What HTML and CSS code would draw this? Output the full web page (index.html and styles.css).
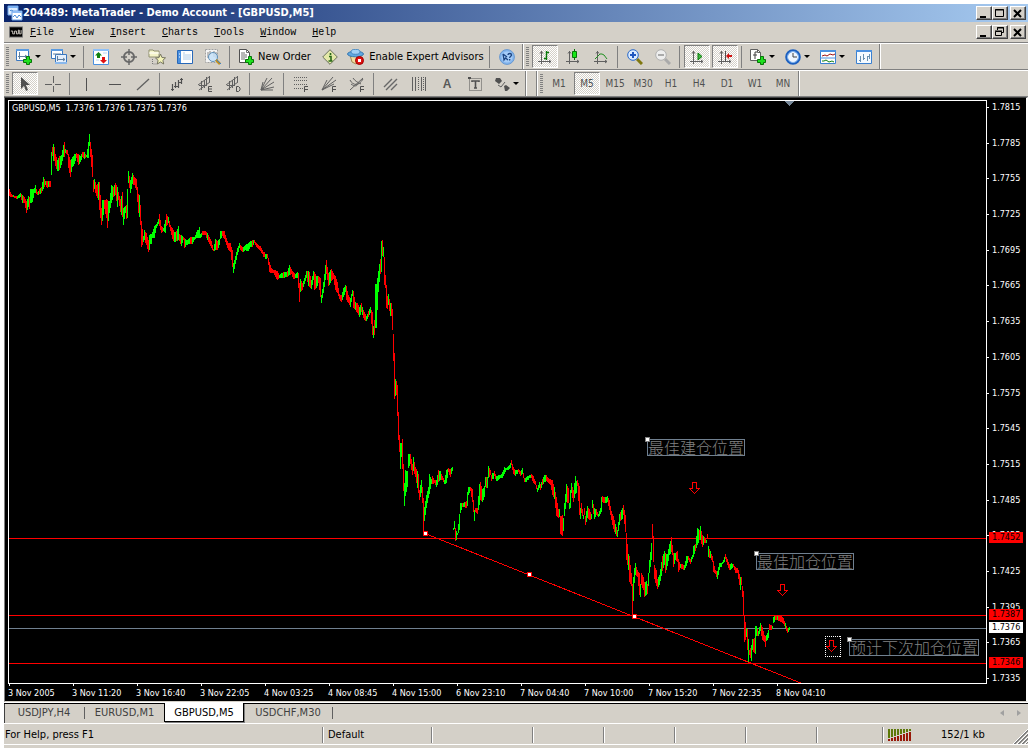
FILE: index.html
```html
<!DOCTYPE html>
<html lang="en">
<head>
<meta charset="utf-8">
<title>204489: MetaTrader - Demo Account - [GBPUSD,M5]</title>
<link rel="stylesheet" href="styles.css">
</head>
<body>
<svg class="sprite" aria-hidden="true">
  <defs>
    <g id="plus"><path d="M10.500 7.500h3v3h2v3h-2v2h-3v-2h-3v-3h3z" fill="#1fe01f" stroke="#087408"/></g>
    <g id="axes"><path d="M4.500 2v13M1 12.500h13M3 4.500l1.500-2 1.500 2M12 11l2 1.500-2 1.500" fill="none" stroke="#606060"/></g>
    <g id="min"><path d="M3 9h6v2H3z"/></g>
    <g id="close"><path d="M3 3l7 7M10 3l-7 7" stroke="#000" stroke-width="2"/></g>
    <g id="down-arrow"><path d="M3.500.5h4v6h3l-5 5-5-5h3z" fill="none" stroke="#f00"/></g>
  </defs>
</svg>
<div class="app">
  <header class="titlebar">
    <svg class="icon" viewBox="0 0 16 16"><path d="M1 1h10v9H1z" fill="#dcecff" stroke="#6da4e8"/><path d="M1 1h10v2H1z" fill="#7db2f2"/><path d="M5 6h10v9H5z" fill="#fff" stroke="#6da4e8"/><path d="M5 6h10v2H5z" fill="#8fbdf5"/><path d="M6 12l2-2 2 3 2-3 2 2M3 6l1-1 2 1" fill="none" stroke="#4b8dd8"/></svg>
    <h1 class="title">204489: MetaTrader - Demo Account - [GBPUSD,M5]</h1>
    <div class="controls">
      <button class="ctl" aria-label="Minimize"><svg viewBox="0 0 13 12"><use href="#min"/></svg></button><button class="ctl" aria-label="Maximize"><svg viewBox="0 0 13 12"><path d="M2.500 2.500h8v7h-8zM2 3h9" fill="none" stroke="#000"/></svg></button><button class="ctl ctl-close" aria-label="Close"><svg viewBox="0 0 13 12"><use href="#close"/></svg></button>
    </div>
  </header>
  <nav class="menubar">
    <svg class="doc-icon" viewBox="0 0 15 12"><path d="M0 0h15v12H0z" fill="#808080"/><path d="M1 1h13v10H1z"/><path d="M2 5h2v3h2V5h2v3h2V4h1v4h2V4" fill="none" stroke="#d4d0c8"/></svg>
    <button class="menu"><u>F</u>ile</button><button class="menu"><u>V</u>iew</button><button class="menu"><u>I</u>nsert</button><button class="menu"><u>C</u>harts</button><button class="menu"><u>T</u>ools</button><button class="menu"><u>W</u>indow</button><button class="menu"><u>H</u>elp</button>
    <div class="controls">
      <button class="ctl" aria-label="Minimize chart"><svg viewBox="0 0 13 12"><use href="#min"/></svg></button><button class="ctl" aria-label="Restore chart"><svg viewBox="0 0 13 12"><path d="M4.500 4V1.500h6v5H8M4 2h7M2.500 5.500h6v4h-6zM2 5h7" fill="none" stroke="#000"/></svg></button><button class="ctl ctl-close" aria-label="Close chart"><svg viewBox="0 0 13 12"><use href="#close"/></svg></button>
    </div>
  </nav>

  <div class="toolrow">
    <div class="toolbar">
      <span class="grip"></span>
      <button class="tool drop" aria-label="New chart"><svg class="icon" viewBox="0 0 16 16"><path d="M.5.500h12v11H.5z" fill="#fff" stroke="#3a78c0"/><path d="M0 0h13v2H0z" fill="#5a9ae0"/><path d="M3.500 3v7M2 7.500h9M9 6l2 1.500L9 9" stroke="#6080a0" fill="none"/><use href="#plus"/></svg></button>
      <button class="tool drop" aria-label="Profiles"><svg class="icon" viewBox="0 0 16 16"><path d="M.5.5h11v9H.5z" fill="#fff" stroke="#3a78c0"/><path d="M0 0h12v2H0z" fill="#5a9ae0"/><path d="M4.500 5.500h11v9h-11z" fill="#e6f0fc" stroke="#3a78c0"/><path d="M4 13h12v2H4z" fill="#8ab8ec"/><path d="M2 5h8M6.500 7v5M6 10.500h8M12 9l2 1.500-2 1.500" stroke="#6080a0" fill="none"/></svg></button>
      <span class="sep"></span>
      <button class="tool" aria-label="Market watch"><svg class="icon" viewBox="0 0 16 16"><path d="M.5.5h15v15H.5z" fill="#fff" stroke="#4a90e0"/><path d="M0 0h16v2H0z" fill="#8ec0f8"/><path d="M3 5h5M8 12h5M3 11h3M10 4h4" stroke="#b8d4f4"/><path d="M5.500 3l3.500 3.500H7V9H4V6.500H2z" fill="#108010"/><path d="M10.500 14.500L7 11h2V8h3v3h2z" fill="#e01010"/></svg></button>
      <button class="tool" aria-label="Data window"><svg class="icon" viewBox="0 0 16 16"><circle cx="8" cy="8" r="5" fill="none" stroke="#686868" stroke-width="2"/><path d="M8 0v6M8 10v6M0 8h6M10 8h6" stroke="#686868" stroke-width="1.500"/></svg></button>
      <button class="tool" aria-label="Navigator"><svg class="icon wide" viewBox="0 0 18 16"><path d="M1 3V1h4l1 1h5v6H1z" fill="#f4f4c8" stroke="#909070"/><path d="M1 4h10" stroke="#fff"/><path d="M4.500 10v5h4" fill="none" stroke="#777" stroke-dasharray="1 1"/><path d="M12.500 5l1.500 3.500 3.500.3-2.600 2.500.8 3.700-3.200-2-3.200 2 .8-3.700L7.500 9l3.500-.4z" fill="#f4f4b8" stroke="#757560"/></svg></button>
      <button class="tool" aria-label="Terminal"><svg class="icon" viewBox="0 0 16 16"><path d="M.5 1.500h15v13H.5z" fill="#fff" stroke="#2868b8"/><path d="M1 2h3v12H1z" fill="#4a90e0"/><path d="M6 4h2M6 6h8M6 8h8M6 10h8" stroke="#b0cce8"/><path d="M2 5h1M2 8h1" stroke="#fff"/></svg></button>
      <button class="tool" aria-label="Strategy tester"><svg class="icon" viewBox="0 0 16 16"><path d="M.5.500h12v13H.5z" fill="#f4f4f4" stroke="#a0a0a0" stroke-dasharray="2 1"/><path d="M3 3v6M5 2v4M9 2v6M11 3v6" stroke="#888"/><circle cx="8" cy="8" r="4.500" fill="#c6e0f8" fill-opacity=".85" stroke="#6090b8"/><path d="M11 11l4 4" stroke="#c09020" stroke-width="2.500"/><path d="M12 11l4 4" stroke="#4080c0"/></svg></button>
      <span class="sep"></span>
      <button class="tool labelled order"><svg class="icon" viewBox="0 0 16 16"><path d="M1.500.500h7l3 3v10h-10z" fill="#fff" stroke="#505050"/><path d="M8.500.5v3h3M3 4h4M3 6h6M3 8h6M3 10h4" fill="none" stroke="#707070"/><use href="#plus"/></svg>New Order</button>
      <button class="tool" aria-label="MetaEditor"><svg class="icon" viewBox="0 0 16 16"><path d="M8 .700L15.300 8 8 15.300.7 8z" fill="#e4e8a8" stroke="#68705c"/><path d="M8.500 4v2M7 7.500h2v4M6.500 12h4" stroke="#286818" stroke-width="1.600" fill="none"/></svg></button>
      <button class="tool labelled experts"><svg class="icon wide" viewBox="0 0 18 16"><path d="M3 6h11l-1 6-4 3-4-2z" fill="#f0dca0" stroke="#a08850"/><ellipse cx="8.500" cy="5" rx="8" ry="2.800" fill="#60a8e0" stroke="#3878b0"/><ellipse cx="8.500" cy="2.800" rx="4.500" ry="2.500" fill="#a0d0f4" stroke="#4888c0"/><circle cx="12.500" cy="11.500" r="4" fill="#e01010" stroke="#a00000"/><path d="M11 10h3v3h-3z" fill="#fff"/></svg>Enable Expert Advisors</button>
      <span class="sep"></span>
      <button class="tool" aria-label="Help"><svg class="icon" viewBox="0 0 16 16"><circle cx="8" cy="8" r="7.400" fill="#85b6ee" stroke="#6898d0"/><circle cx="8" cy="8" r="5.500" fill="#a5ccf8"/><path d="M4 5l1 6 1.500-2L9 11M4 5l4 3M9 6c0-2 3.500-2 3.500 0 0 1.500-1.800 1-1.800 3M10.700 10v1.500" fill="none" stroke="#1c4480" stroke-width="1.300"/></svg></button>
    </div>
    <div class="toolbar">
      <span class="grip"></span>
      <button class="tool pressed" aria-label="Bar chart"><svg class="icon" viewBox="0 0 16 16"><use href="#axes"/><path d="M9.500 2v9M7 9.500h2M10 3.500h2" stroke="#087808" stroke-width="1.400"/></svg></button>
      <button class="tool" aria-label="Candlesticks"><svg class="icon" viewBox="0 0 16 16"><use href="#axes"/><path d="M9.500 0v11" stroke="#087808"/><path d="M7.500 2.500h4v6h-4z" fill="#18e818" stroke="#087808"/></svg></button>
      <button class="tool" aria-label="Line chart"><svg class="icon" viewBox="0 0 16 16"><use href="#axes"/><path d="M2 10L7 5h2l2 1 3 4" fill="none" stroke="#209020"/></svg></button>
      <span class="sep"></span>
      <button class="tool" aria-label="Zoom in"><svg class="icon" viewBox="0 0 16 16"><path d="M10 10l5 5" stroke="#807810" stroke-width="3"/><circle cx="6" cy="6" r="5.300" fill="#dcecff" stroke="#2868c8"/><path d="M3 6h6M6 3v6" stroke="#2058c0" stroke-width="2"/></svg></button>
      <button class="tool" aria-label="Zoom out"><svg class="icon" viewBox="0 0 16 16"><path d="M10 10l5 5" stroke="#aaa" stroke-width="3"/><circle cx="6" cy="6" r="5.300" fill="#eee" stroke="#b0b0b0"/><path d="M3 6h6" stroke="#aaa" stroke-width="2"/></svg></button>
      <span class="sep"></span>
      <button class="tool pressed" aria-label="Auto scroll"><svg class="icon" viewBox="0 0 16 16"><use href="#axes"/><path d="M9 4l4 3.500L9 11z" fill="#40b840" stroke="#087808"/></svg></button>
      <button class="tool pressed" aria-label="Chart shift"><svg class="icon" viewBox="0 0 16 16"><use href="#axes"/><path d="M8.500 2v10" stroke="#505050"/><path d="M9 7l3-3v2h3v2h-3v2z" fill="#d01010"/></svg></button>
      <span class="sep"></span>
      <button class="tool drop" aria-label="Indicators"><svg class="icon" viewBox="0 0 16 16"><path d="M.5.500h7l3 3v8H.5z" fill="#fff" stroke="#606060"/><path d="M7 3H5v7M3 6h4" fill="none" stroke="#404040"/><path d="M7.500.5v3h3" fill="none" stroke="#606060"/><use href="#plus"/></svg></button>
      <button class="tool drop" aria-label="Periods"><svg class="icon" viewBox="0 0 16 16"><circle cx="8" cy="8" r="6.500" fill="#eef6ff" stroke="#1c60c0" stroke-width="2.600"/><circle cx="8" cy="8" r="5.500" fill="none" stroke="#88b8f0"/><path d="M8 4v4h4" fill="none" stroke="#404040"/></svg></button>
      <button class="tool drop" aria-label="Templates"><svg class="icon" viewBox="0 0 16 16"><path d="M.5 1.500h15v13H.5z" fill="#fff" stroke="#3a80d0"/><path d="M0 1h16v2H0z" fill="#4a90e0"/><path d="M0 9h16" stroke="#4a90e0"/><path d="M2 7l3-1 2 1 3-2 3 1 2-1" fill="none" stroke="#a01010"/><path d="M2 12h2l2-1 3 2 3-1 2 1" fill="none" stroke="#108010"/></svg></button>
      <button class="tool" aria-label="Tile windows"><svg class="icon" viewBox="0 0 16 16"><path d="M.5 1.500h15v13H.5z" fill="#f4faff" stroke="#3a80d0"/><path d="M0 1h16v2H0z" fill="#4a90e0"/><path d="M4.500 7v6M3 11.500h2M7.500 5v6M7 9.500h2M11.500 7v5M11 7.500h2M13.500 5v5" stroke="#6890b0" fill="none"/></svg></button>
    </div>
  </div>

  <div class="toolrow">
    <div class="toolbar">
      <span class="grip"></span>
      <button class="tool pressed" aria-label="Cursor"><svg class="icon" viewBox="0 0 16 16"><path d="M4 1v12l3-3 2 5 2-1-2-5h4z" fill="#505050"/></svg></button>
      <button class="tool" aria-label="Crosshair"><svg class="icon" viewBox="0 0 16 16"><path d="M8.500 0v7M8.500 10v6M0 8.500h7M10 8.500h6" stroke="#606060"/></svg></button>
      <span class="sep"></span>
      <button class="tool" aria-label="Vertical line"><svg class="icon" viewBox="0 0 16 16"><path d="M7.500 2v13" stroke="#505050"/></svg></button>
      <button class="tool" aria-label="Horizontal line"><svg class="icon" viewBox="0 0 16 16"><path d="M2 8.500h12" stroke="#505050"/></svg></button>
      <button class="tool" aria-label="Trendline"><svg class="icon" viewBox="0 0 16 16"><path d="M2 14L14 3" stroke="#606060" stroke-width="1.300"/></svg></button>
      <span class="sep"></span>
      <button class="tool" aria-label="Regression channel"><svg class="icon" viewBox="0 0 16 16"><path d="M3.500 8v7M2 13.500h3M6.500 6v6M5 10.500h4M9.500 4v8M9 6.500h3M12.500 2v6M11 3.500h3" fill="none" stroke="#505050" stroke-width="1.200"/></svg></button>
      <button class="tool" aria-label="Equidistant channel"><svg class="icon" viewBox="0 0 16 16"><path d="M1 9L12 1M2 14L13 6M4.500 5v9M7.500 4v8M9.500 1v9M12.500 0v6M2 9.500h7" fill="none" stroke="#606060"/><path d="M15 10.500h-3.500v5H15M12 13h3" fill="none" stroke="#505050"/></svg></button>
      <button class="tool" aria-label="Deviation channel"><svg class="icon" viewBox="0 0 16 16"><path d="M1 9L12 1M2 14L13 6M4.500 5v9M7.500 4v8M9.500 1v9M12.500 0v6M2 9.500h7" fill="none" stroke="#606060"/><path d="M11.500 10.500h2l1.500 1.500v2l-1.500 1.500h-2z" fill="none" stroke="#505050"/></svg></button>
      <span class="sep"></span>
      <button class="tool" aria-label="Gann fan"><svg class="icon" viewBox="0 0 16 16"><path d="M2 14L4 6M2 14L8 2M2 14L13 2M2 14L15 6M2 14l13-3M2 14h12" stroke="#606060"/></svg></button>
      <span class="sep"></span>
      <button class="tool" aria-label="Fibonacci retracement"><svg class="icon" viewBox="0 0 16 16"><path d="M1 1.500h14M1 4.500h14M1 8.500h14M1 12.500h9" stroke="#606060" stroke-dasharray="1 1"/><path d="M11.500 16v-5.500H15M12 13.500h3" fill="none" stroke="#505050"/></svg></button>
      <button class="tool" aria-label="Fibonacci fan"><svg class="icon" viewBox="0 0 16 16"><path d="M1 14L6 4M1 14L12 1M1 14L15 4M1 14l12-6" stroke="#606060"/><path d="M11.500 16v-5.500H15M12 13.500h3" fill="none" stroke="#505050"/></svg></button>
      <button class="tool" aria-label="Fibonacci arcs"><svg class="icon" viewBox="0 0 16 16"><path d="M1 14L14 2M1 4c3 6 9 6 13-1M4 2c2 3 4 4 8 6M2 8c4 3 6 2 7 0" fill="none" stroke="#606060"/><path d="M11.500 16v-5.500H15M12 13.500h3" fill="none" stroke="#505050"/></svg></button>
      <span class="sep"></span>
      <button class="tool" aria-label="Parallel lines"><svg class="icon" viewBox="0 0 16 16"><path d="M1 11L9 3M3 14L14 3M8 14l6-6" stroke="#686868" stroke-width="1.400"/></svg></button>
      <button class="tool" aria-label="Cycle lines"><svg class="icon" viewBox="0 0 16 16"><path d="M1.500 1v14M4.500 1v14M10.500 1v14M14.500 1v14" stroke="#606060"/><path d="M7.500 1v14M12.500 1v14" stroke="#606060" stroke-dasharray="1 1"/></svg></button>
      <button class="tool letter">A</button>
      <button class="tool" aria-label="Text label"><svg class="icon" viewBox="0 0 16 16"><path d="M2.500 2.500h12v12h-12z" fill="none" stroke="#505050" stroke-dasharray="1 1"/><path d="M1 1h3v2H1z" fill="#505050"/><path d="M5 6V5h7v1M8.500 5v7M7 12h3" fill="none" stroke="#505050" stroke-width="1.600"/></svg></button>
      <button class="tool drop" aria-label="Arrows"><svg class="icon" viewBox="0 0 16 16"><path d="M2 2h4l2 3-3 3-4-3zM10 10l2-1 4 3-3 3h-2z" fill="#505050"/><path d="M7 11l4-5M4 9l3 2" stroke="#606060"/></svg></button>
    </div>
    <div class="toolbar filler"></div>
    <div class="toolbar">
      <span class="grip"></span>
      <button class="tool time">M1</button><button class="tool time pressed">M5</button><button class="tool time">M15</button><button class="tool time">M30</button><button class="tool time">H1</button><button class="tool time">H4</button><button class="tool time">D1</button><button class="tool time">W1</button><button class="tool time">MN</button>
    </div>
  </div>

  <main class="chart">
    <section class="plot">
      <svg class="canvas" id="canvas" viewBox="9 101 977 582" preserveAspectRatio="none">
        <path d="M785 101h9l-4.500 5z" fill="#778899"/>
        <path d="M9 538.500h977M9 615.500h977M9 663.500h977" stroke="#f00"/>
        <path d="M9 628.500h977" stroke="#708090"/>
        <path id="falling" class="bars" stroke="#f00"/>
        <path id="rising" class="bars" stroke="#0f0"/>
        <path class="bars" d="M425 533.500L802 683.500" stroke="#f00"/>
        <path d="M423.500 531.500h4v4h-4zM527.500 572.500h4v4h-4zM632.500 614.500h4v4h-4z" fill="#fff" stroke="#f00"/>
        <use href="#down-arrow" x="689" y="482"/><use href="#down-arrow" x="777" y="584"/><use href="#down-arrow" x="826" y="640"/>
        <path d="M825 636.500h16M825 656.500h16M825.500 636v21M840.500 636v21" fill="none" stroke="#fff" stroke-dasharray="1 1"/>
      </svg>
      <p class="quote">GBPUSD,M5&nbsp; 1.7376 1.7376 1.7375 1.7376</p>
      <p class="note note-open" lang="zh">最佳建仓位置</p>
      <p class="note note-add" lang="zh">最佳加仓位置</p>
      <p class="note note-next" lang="zh">预计下次加仓位置</p>
    </section>
    <aside class="prices">
      <span>1.7815</span><span>1.7785</span><span>1.7755</span><span>1.7725</span><span>1.7695</span><span>1.7665</span><span>1.7635</span><span>1.7605</span><span>1.7575</span><span>1.7545</span><span>1.7515</span><span>1.7485</span><span>1.7455</span><span>1.7425</span><span>1.7395</span><span>1.7365</span><span>1.7335</span>
      <b class="tag tag-high">1.7452</b><b class="tag tag-mid">1.7387</b><b class="tag tag-now">1.7376</b><b class="tag tag-low">1.7346</b>
    </aside>
    <div class="times">
      <span>3 Nov 2005</span><span>3 Nov 11:20</span><span>3 Nov 16:40</span><span>3 Nov 22:05</span><span>4 Nov 03:25</span><span>4 Nov 08:45</span><span>4 Nov 15:00</span><span>6 Nov 23:10</span><span>7 Nov 04:40</span><span>7 Nov 10:00</span><span>7 Nov 15:20</span><span>7 Nov 22:35</span><span>8 Nov 04:10</span>
    </div>
  </main>

  <nav class="tabs">
    <button class="tab">USDJPY,H4</button><span class="tab-end"></span><button class="tab narrow">EURUSD,M1</button><button class="tab active">GBPUSD,M5</button><button class="tab wide">USDCHF,M30</button><span class="tab-end"></span>
    <div class="scrollers">
      <button class="scroller" aria-label="Scroll left"><svg viewBox="0 0 4 6"><path d="M4 0v6L0 3z"/></svg></button>
      <button class="scroller" aria-label="Scroll right"><svg viewBox="0 0 4 6"><path d="M0 0v6l4-3z"/></svg></button>
    </div>
  </nav>
  <footer class="status">
    <span class="cell help">For Help, press F1</span><span class="cell profile">Default</span><span class="cell c-long"></span><span class="cell c-short"></span><span class="cell c-short"></span><span class="cell c-short"></span><span class="cell c-short"></span><span class="cell c-last"></span>
    <span class="cell traffic">
      <svg class="signal" viewBox="0 0 23 12"><path d="M1 0v9M4 0v8M7 0v7M10 0v6M13 0v5M16 0v4M19 0v3M22 0v2" stroke="#5c7808" stroke-width="2"/><path d="M1 10v2M4 9v3M7 8v4M10 7v5M13 6v6M16 5v7M19 4v8M22 3v9" stroke="#981808" stroke-width="2"/></svg>
      152/1 kb
    </span>
    <svg class="sizer" viewBox="0 0 16 16"><path d="M1 16L16 1M5 16L16 5M9 16l7-7M13 16l3-3" stroke="#fff"/><path d="M2 16L16 2M3 16L16 3M6 16L16 6M7 16l9-9M10 16l6-6M11 16l5-5M14 16l2-2" stroke="#808080"/></svg>
  </footer>
</div>
<script src="chart.js"></script>
</body>
</html>
```

FILE: styles.css
```css
* { box-sizing: border-box; }
body { margin: 0; background: #fff; padding: 4px 4px 0; font: 11px/13px "DejaVu Sans Condensed", "DejaVu Sans", sans-serif; color: #000; }
button { font: inherit; color: inherit; background: none; border: 0; padding: 0; margin: 0; }
p, h1 { margin: 0; }
svg { display: block; }
.sprite { position: absolute; width: 0; height: 0; }
.app { display: flex; flex-direction: column; min-height: calc(100vh - 4px); background: #d4d0c8; }
.icon { width: 16px; height: 16px; flex: none; }
.icon.wide { width: 18px; }

.titlebar { display: flex; align-items: center; height: 18px; padding: 0 2px 0 3px; background: linear-gradient(90deg, #0a246a, #a6caf0); color: #fff; }
.title { font-size: 11px; line-height: 18px; font-weight: bold; flex: 1; white-space: nowrap; }
.controls { display: flex; margin-left: auto; }
.ctl { width: 16px; height: 14px; background: #d4d0c8; border: 1px solid; border-color: #fff #404040 #404040 #fff; box-shadow: inset -1px -1px #808080; }
.ctl svg { width: 13px; height: 12px; }
.ctl-close { margin-left: 2px; }
.menubar { display: flex; align-items: center; height: 21px; padding: 0 2px 0 5px; border-bottom: 1px solid #808080; }
.doc-icon { width: 14px; height: 12px; margin-right: -1px; }
.menu { font: 10px/14px "Liberation Mono", monospace; padding: 1px 8px 0; }

.toolrow { display: flex; height: 27px; border-top: 1px solid #fff; border-bottom: 1px solid #808080; background: #d4d0c8; }
.toolbar { display: flex; align-items: center; padding-right: 1px; border-right: 1px solid #808080; box-shadow: 1px 0 #fff; }
.toolbar + .toolbar { margin-left: 1px; }
.filler { width: 10px; }
.grip { width: 3px; height: 20px; margin: 0 2px; background: repeating-linear-gradient(#808080 0 1px, #d4d0c8 1px 2px); }
.tool { width: 28px; height: 23px; display: flex; align-items: center; justify-content: center; }
.tool.pressed { width: 26px; margin: 0 1px; border: 1px solid; border-color: #808080 #fff #fff #808080; background: repeating-conic-gradient(#fff 0 25%, #d4d0c8 0 50%) 0 0 / 2px 2px; }
.tool.drop { width: 35px; gap: 3px; }
.tool.drop::after { content: ""; border: 3px solid transparent; border-top-color: #000; border-bottom: 0; }
.tool.labelled { gap: 4px; white-space: nowrap; }
.tool.order { width: 83px; }
.tool.experts { width: 143px; }
.sep { width: 6px; height: 22px; background: linear-gradient(#808080, #808080) 2px 0 / 1px 100% no-repeat; }
.letter { font: bold 12px/14px "Liberation Sans", sans-serif; color: #585858; }
.time { font-size: 10px; color: #505050; }

.chart { flex: 1; display: grid; grid-template: minmax(0, 1fr) 17px / minmax(0, 1fr) 39px; background: #000; color: #fff; font-size: 9px; line-height: 11px; border-top: 1px solid #404040; border-left: 1px solid #808080; border-right: 2px solid #fff; border-bottom: 1px solid #d4d0c8; padding: 2px 0 0 3px; }
.plot { position: relative; border: 1px solid #fff; min-height: 300px; }
.canvas { position: absolute; inset: 0; width: 100%; height: 100%; shape-rendering: crispEdges; }
.bars { fill: none; }
.quote { position: absolute; left: 3px; top: 2px; }
.note { position: absolute; height: 17px; border: 1px solid #708090; color: #808080; font: 16px/14px "Noto Sans CJK SC", sans-serif; font-weight: 300; white-space: nowrap; }
.note::before { content: ""; position: absolute; left: -3px; top: -3px; width: 3px; height: 3px; background: #fff; border: 1px solid #808080; }
.note-open { left: 638px; top: 338px; }
.note-add { left: 747px; top: 452px; }
.note-next { left: 840px; top: 538px; }
.prices { position: relative; display: flex; flex-direction: column; justify-content: space-between; padding: 2px 0 0; }
.prices span { display: flex; align-items: center; gap: 3px; }
.prices span::before { content: ""; width: 2px; height: 1px; background: #fff; }
.tag { position: absolute; left: 2px; width: 34px; padding-left: 3px; background: #f00; color: #000; font-weight: normal; }
.tag-high { top: 432px; }
.tag-mid { top: 509px; }
.tag-now { top: 522px; background: #fff; }
.tag-low { top: 557px; }
.times { grid-column: 1 / 3; display: flex; overflow: hidden; }
.times span { position: relative; flex: 0 0 64px; padding-top: 4px; line-height: 11px; white-space: nowrap; }
.times span::before { content: ""; position: absolute; left: 1px; top: 0; width: 1px; height: 2px; background: #fff; }

.tabs { display: flex; height: 21px; border-top: 1px solid #fff; box-shadow: inset 0 1px #000, inset 1px 0 #404040; color: #404040; }
.tab { height: 19px; width: 80px; }
.tab-end { width: 1px; height: 12px; background: #606060; margin-top: 4px; }
.tab.narrow { width: 79px; }
.tab.wide { width: 88px; }
.tab.active { background: #fff; color: #000; border: 1px solid #000; border-top: 0; box-shadow: 1px 1px #808080; }
.scrollers { margin: 7px 7px 0 auto; display: flex; gap: 13px; align-items: flex-start; }
.scroller svg { width: 4px; height: 6px; fill: #a0a0a0; }

.status { position: relative; display: flex; align-items: center; height: 25px; border-top: 1px solid #fff; border-bottom: 3px solid #d4d0c8; box-shadow: inset 0 -1px #fff; }
.cell { height: 16px; line-height: 16px; border-right: 1px solid #808080; box-shadow: 1px 0 #fff; white-space: nowrap; padding-left: 1px; }
.help { flex: 1; }
.profile { width: 109px; padding-left: 5px; }
.c-long { width: 101px; }
.c-short { width: 71px; }
.c-last { width: 66px; }
.traffic { width: 145px; display: flex; align-items: center; gap: 30px; padding-left: 5px; border: 0; box-shadow: none; }
.signal { width: 23px; height: 12px; }
.sizer { position: absolute; right: 0; bottom: 1px; width: 16px; height: 16px; }
```

FILE: chart.js
```js
// Each bar: x, high, low and an optional colour (r = falling, g = rising).
const bars = `9 189 196 r,11 194 197 r,13 195 197 g,16 196 199 r,18 195 198 g,20 193 197 g,22 195 203 g,24 197 203 r,26 201 213 r,28 196 207 g,29 197 209 r,30 189 203 g,32 189 202 g,34 188 193 g,35 185 193 g,37 192 195 r,39 189 194 r,41 187 193 r,43 177 189 g,45 181 185 g,47 181 188 r,48 181 187 g,50 181 187 r,51 152 175 g,52 147 156 r,53 144 161 g,54 147 161 r,55 154 166 r,57 160 171 g,59 156 170 r,61 155 165 g,63 145 157 g,64 142 157 r,65 149 153 g,67 150 155 r,68 154 168 r,70 160 177 r,72 157 167 g,74 154 164 g,76 153 158,78 154 165 r,80 156 162 g,82 152 157 r,84 152 159 g,86 155 157,88 142 158 g,89 134 146 g,90 142 157 r,92 155 177 r,93 180 192 r,94 179 189 g,96 185 196 r,98 182 200 g,99 182 210 r,101 208 225 r,102 200 221 g,104 200 209 r,106 199 218 r,107 200 228 r,109 201 213 g,111 185 203 g,113 187 197 r,115 183 195 r,117 187 207 g,118 192 200 r,120 199 212 r,122 192 217 r,123 208 225 g,125 206 213 g,126 205 219 r,127 189 218 g,128 171 183 g,130 180 193 g,132 173 184 g,134 177 185 r,136 179 190 r,138 194 213 r,139 195 217 g,140 205 225 r,141 221 247 r,143 236 242 g,144 230 240 g,146 233 245 r,148 240 252 r,149 235 250 g,152 232 238 g,154 226 238 g,156 224 228,158 219 224 g,159 214 226 r,161 226 233 r,163 228 231,165 220 233 g,166 214 226 r,168 217 223 g,170 225 231 r,172 228 239 r,174 232 242 g,176 231 241 r,178 226 240 g,179 234 241 r,181 235 246 g,183 237 240,184 238 248 r,186 240 245,188 239 244 g,190 237 244 r,192 237 244 g,194 237 240,196 232 238 g,199 227 238 g,200 234 238,202 231 235,205 231 235 r,207 233 240 g,209 237 244,211 241 248 r,213 249 251 r,215 239 250 g,217 241 250 r,219 239 245 g,220 231 239 g,222 231 236,224 231 239 r,226 238 245,228 243 250 r,230 243 252 r,232 250 267 r,233 263 273 g,235 256 264 g,237 248 255 g,239 243 248 g,241 246 251 r,243 247 252,245 245 250 g,248 243 251,250 241 247,252 240 247 r,254 240 243,256 243 247 r,258 245 249,260 246 251 r,262 250 254,265 254 259 g,267 254 258,269 262 272 r,271 268 273 r,273 270 273,275 270 277,277 271 280 r,279 275 278,281 273 278 g,283 272 278 r,285 272 277 g,287 271 277 r,289 265 275 g,291 269 274,293 272 279 r,295 274 278,297 272 278 g,298 273 288 r,299 283 302 r,300 279 292 g,302 283 290 r,304 278 284 g,306 271 278 g,308 271 286 g,309 272 287 r,311 280 289 g,313 271 280 g,314 272 290 r,316 276 288 g,318 276 283 r,320 278 297 r,321 295 303 g,323 282 293 g,325 265 280 g,326 260 274 r,328 273 286 r,330 270 283 g,331 269 281 r,333 273 279,335 276 290 r,337 282 293 r,339 294 299 r,341 295 302 r,343 288 297 g,345 285 292 g,346 286 300 r,348 295 303,350 298 307 g,352 290 296 g,353 291 308 r,355 302 310 g,357 303 313 r,359 307 317 g,361 303 312 r,362 307 315 g,364 312 320 r,366 316 321 g,368 311 317 r,370 307 313 g,372 312 335 r,373 326 338 g,374 320 335 r,375 284 328 g,376 284 328 g,378 271 292 g,379 264 282 g,380 259 274 r,381 241 272 g,382 240 256 r,383 247 257 g,384 257 285 r,385 275 288 r,386 285 308 r,387 296 309 r,388 294 305 g,390 303 316 g,391 303 316 r,392 309 330 r,393 334 361 r,394 353 399 r,395 379 396 g,396 381 395 r,397 385 416 r,398 412 440 r,399 435 452 r,400 443 469 g,401 443 457 g,402 439 469 r,403 464 491 r,404 483 506 g,405 470 496 g,407 471 487,408 454 468 g,410 454 464 r,412 464 475 r,413 457 471 g,415 467 477 r,417 471 488 g,418 474 493 r,419 490 500 r,421 480 493 g,422 487 503 r,423 498 533 r,424 507 521 g,426 495 508 g,428 487 498 g,429 474 494 g,431 479 484,432 476 484 r,434 480 483,436 480 487,438 470 482 r,440 471 480 g,442 476 480,444 480 484,446 470 483 g,448 468 472,450 469 477 r,452 467 471 g,453 528 530 g,454 521 529 g,455 528 541 r,456 531 540 g,457 533 535 g,459 514 530 g,460 503 513 g,462 503 507 r,464 502 507 g,466 501 508 r,467 492 506 g,468 487 495 g,470 487 491,472 489 502 r,474 510 521 g,475 508 512,477 508 514 r,479 484 505 g,480 482 500 r,482 489 502 g,484 486 497,485 477 487 g,487 477 488 g,488 466 478 g,490 470 475,491 475 481 r,494 471 476 r,496 476 481,498 475 480 g,500 475 478,502 472 478,504 467 474 g,506 468 470,508 466 470,510 463 468 g,511 460 465 r,513 467 474 r,515 470 476,518 469 472,520 471 476 r,522 468 474 g,524 478 482 r,526 477 482 g,529 475 478,531 474 478,533 476 483 r,535 481 485 r,537 488 492 g,539 482 488 g,540 484 490 r,542 479 485 r,544 475 482 g,546 475 481,548 478 483,550 479 485 r,552 480 495 r,554 487 499 g,556 497 516 r,558 509 518 r,559 509 517 g,560 516 534 r,562 515 536 r,563 518 531 g,564 503 516 g,566 484 502 g,568 488 503 r,569 503 509,570 490 508 g,571 483 493 g,573 490 502 r,575 476 494 g,576 481 493,577 480 486 r,579 486 515 r,580 508 519 g,581 503 513 r,583 515 519,584 508 515 r,585 516 525 r,587 506 518 g,589 509 520 r,591 514 519,592 500 508 g,594 508 519,596 509 515,598 514 517,600 508 514 g,601 497 512 g,602 496 502 r,605 497 503,607 496 502 g,609 500 510 r,611 511 520 r,613 516 529 r,615 524 534 g,617 530 537 g,619 514 525 g,620 512 521 r,622 508 519 g,623 505 515 r,625 515 532 r,626 533 560 r,628 554 570 g,629 556 582 r,631 573 586 r,632 584 616 r,633 577 601 g,634 568 583,635 563 575 g,637 570 577 r,639 573 595 r,640 584 597 g,641 573 585,643 577 590 r,644 582 597 r,646 581 595 g,647 584 594 r,648 573 586 g,649 560 573 g,651 543 560 g,652 524 538 r,653 536 562 r,654 565 579 r,656 570 586 r,657 579 589 r,659 575 585 g,661 562 576 g,662 556 571 r,664 551 565 g,665 553 573 r,667 554 566 g,669 544 555 g,671 537 552 r,672 545 555 r,673 553 567 r,675 553 560 g,677 551 562 r,678 559 572 r,680 564 568 g,682 564 569,684 565 570 g,686 556 566 g,688 556 560,690 559 564 r,692 555 559 g,693 546 557,695 544 551 r,697 528 545 g,699 530 540 r,700 526 540 g,702 535 547 r,704 537 543,706 540 543,707 534 538 r,708 546 557 g,710 551 558 g,712 556 562 r,713 561 572 r,715 570 574,717 571 579 g,719 563 570 g,722 562 564,724 557 562,725 554 559 r,727 559 565 r,729 564 570 r,731 563 569 g,733 564 567,735 567 573 r,737 568 573,738 570 579 r,740 577 590 g,741 577 585,742 586 597 r,743 591 616 r,744 615 642 r,746 628 637 g,747 629 650 r,748 639 662 g,749 650 655 r,751 645 661 g,752 639 650 g,754 638 653 r,755 626 654 g,756 626 636 g,758 631 636,760 623 631 g,762 627 640 r,764 635 642 r,765 636 647 r,766 635 641 g,768 630 638 g,769 624 630,772 626 629,773 617 623 g,775 615 620 r,777 616 620 g,779 616 621 r,781 616 622,783 618 624 r,785 623 628 g,787 628 633 r,789 627 630 g`
  .split(",").map(row => {
    const [x, high, low, tone] = row.split(" ");
    return { x: +x, high: +high, low: +low, tone };
  });

const paths = { r: "", g: "" };
bars.forEach((bar, i) => {
  const next = bars[i + 1] || bar;
  const rising = next.high + next.low < bar.high + bar.low;
  const tone = bar.tone || (rising ? "g" : "r");
  paths[tone] += `M${bar.x + 0.5} ${bar.high}V${bar.low}`;
  for (let x = bar.x + 1; x < next.x; x++) {
    const high = Math.round((bar.high + next.high) / 2);
    const low = Math.max(high + 2, Math.round((bar.low + next.low) / 2));
    paths[rising ? "g" : "r"] += `M${x + 0.5} ${high}V${low}`;
  }
});
document.getElementById("falling").setAttribute("d", paths.r);
document.getElementById("rising").setAttribute("d", paths.g);
```
